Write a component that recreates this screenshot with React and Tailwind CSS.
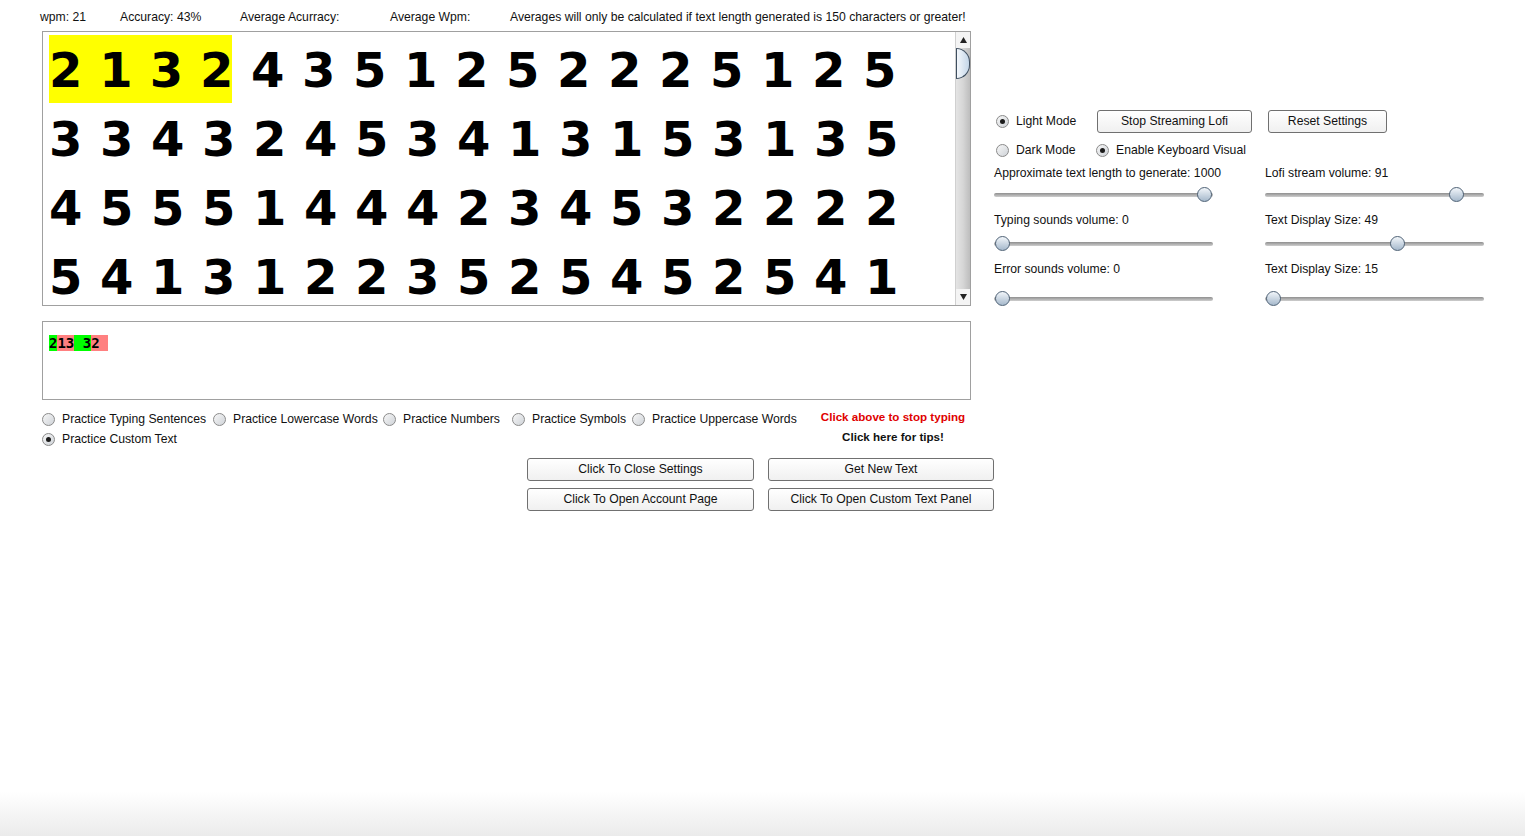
import React from 'react';

const rows = [
  '2 1 3 2 4 3 5 1 2 5 2 2 2 5 1 2 5',
  '3 3 4 3 2 4 5 3 4 1 3 1 5 3 1 3 5',
  '4 5 5 5 1 4 4 4 2 3 4 5 3 2 2 2 2',
  '5 4 1 3 1 2 2 3 5 2 5 4 5 2 5 4 1',
].map(r => r.split(' '));

const Radio = ({ checked }) => (
  <span className="w-[13px] h-[13px] rounded-full border border-[#8a8a8a] bg-linear-to-br from-[#f7f7f7] to-[#cfd3d8] flex items-center justify-center shrink-0">
    {checked && <span className="w-[5px] h-[5px] rounded-full bg-[#1b1b1b]" />}
  </span>
);

const RadioItem = ({ label, checked, className = '' }) => (
  <div className={`flex items-center gap-[7px] h-[16px] ${className}`}>
    <Radio checked={checked} />
    <span className="whitespace-nowrap">{label}</span>
  </div>
);

const Button = ({ children, className = '' }) => (
  <button className={`h-[23px] rounded-[3px] border border-[#707070] bg-linear-to-b from-white to-[#f0f0f0] text-[12.2px] text-[#111] flex items-center justify-center whitespace-nowrap ${className}`}>
    {children}
  </button>
);

const Slider = ({ pos }) => (
  <div className="relative h-[16px] w-[219px]">
    <div className="absolute left-0 right-0 top-[6px] h-[4px] rounded-full bg-linear-to-b from-[#8f8f8f] to-[#cfcfcf]" />
    <div
      className="absolute top-0 w-[15px] h-[15px] rounded-full border border-[#4f6276] bg-linear-to-b from-[#f2f6fa] to-[#a6b9cc]"
      style={{ left: pos }}
    />
  </div>
);

const Arrow = ({ up }) => (
  <svg width="7" height="6" viewBox="0 0 7 6">
    <path d={up ? 'M3.5 0 L7 6 L0 6 Z' : 'M0 0 L7 0 L3.5 6 Z'} fill="#222" />
  </svg>
);

const Digit = ({ d, last }) => (
  <span className={`inline-block text-left ${last ? 'w-[32px]' : 'w-[51px]'}`}>{d}</span>
);

const App = () => {
  return (
    <div className="min-h-[836px] bg-white flex flex-col font-['Liberation_Sans',Arial,sans-serif] text-[12.2px] text-[#111]">
      {/* stats */}
      <div className="h-[31px] pt-[10px] pl-[40px] flex leading-[14px] whitespace-nowrap">
        <span className="w-[80px]">wpm: 21</span>
        <span className="w-[120px]">Accuracy: 43%</span>
        <span className="w-[150px]">Average Acurracy:</span>
        <span className="w-[120px]">Average Wpm:</span>
        <span>Averages will only be calculated if text length generated is 150 characters or greater!</span>
      </div>

      <div className="flex pl-[42px]">
        {/* left column */}
        <div className="w-[929px]">
          <div className="h-[275px] border border-[#a0a0a0] flex">
            <div className="flex-1 overflow-hidden pt-[3px] pl-[6px] font-['DejaVu_Sans',sans-serif] font-bold text-[48px] text-black">
              {rows.map((row, i) => (
                <div key={i} className="h-[69px] leading-[71px] flex whitespace-nowrap">
                  {i === 0 ? (
                    <>
                      <div className="flex bg-[#ffff00] w-[183px] h-[68px] mr-[19px]">
                        {row.slice(0, 4).map((d, j) => <Digit key={j} d={d} last={j === 3} />)}
                      </div>
                      {row.slice(4).map((d, j) => <Digit key={j} d={d} />)}
                    </>
                  ) : (
                    row.map((d, j) => <Digit key={j} d={d} />)
                  )}
                </div>
              ))}
            </div>
            <div className="w-[15px] flex flex-col bg-linear-to-r from-[#e4e4e4] via-[#d6d6d6] to-[#bdbdbd] border-l border-[#d0d0d0]">
              <div className="h-[16px] flex items-center justify-center bg-[#f4f4f4]">
                <Arrow up />
              </div>
              <div className="h-[31px] rounded-r-full rounded-l-[6px] border border-[#3f4f60] bg-linear-to-r from-[#f4f8fc] to-[#c4d6e8]" />
              <div className="flex-1" />
              <div className="h-[16px] flex items-center justify-center bg-[#f4f4f4]">
                <Arrow />
              </div>
            </div>
          </div>

          <div className="mt-[15px] h-[79px] border border-[#a0a0a0] pt-[11px] pl-[6px] font-['DejaVu_Sans_Mono',monospace] font-bold text-[14px] leading-[21px] text-black whitespace-pre">
            <span className="bg-[#00ff00]">2</span>
            <span className="bg-[#ff8080]">13</span>
            <span className="bg-[#00ff00]"> 3</span>
            <span className="bg-[#ff8080]">2 </span>
          </div>

          <div className="mt-[11px] flex">
            <div className="w-[778px]">
              <div className="flex">
                <RadioItem label="Practice Typing Sentences" className="w-[171px]" />
                <RadioItem label="Practice Lowercase Words" className="w-[170px]" />
                <RadioItem label="Practice Numbers" className="w-[129px]" />
                <RadioItem label="Practice Symbols" className="w-[120px]" />
                <RadioItem label="Practice Uppercase Words" className="w-[170px]" />
              </div>
              <div className="mt-[4px]">
                <RadioItem label="Practice Custom Text" checked />
              </div>
            </div>
            <div className="w-[146px] flex flex-col items-center font-bold text-[11.6px] leading-[20px] -mt-[4px]">
              <span className="text-[#e00000] whitespace-nowrap">Click above to stop typing</span>
              <span className="whitespace-nowrap">Click here for tips!</span>
            </div>
          </div>
        </div>

        {/* right panel */}
        <div className="ml-[23px] pt-[79px]">
          <div className="flex items-center h-[23px]">
            <RadioItem label="Light Mode" checked className="w-[101px] ml-[2px]" />
            <Button className="w-[155px]">Stop Streaming Lofi</Button>
            <Button className="w-[119px] ml-[16px]">Reset Settings</Button>
          </div>
          <div className="flex items-center mt-[9px]">
            <RadioItem label="Dark Mode" className="w-[100px] ml-[2px]" />
            <RadioItem label="Enable Keyboard Visual" checked />
          </div>
          <div className="flex gap-[52px]">
            <div className="w-[219px] flex flex-col whitespace-nowrap">
              <span className="mt-[8px] h-[14px] leading-[14px]">Approximate text length to generate: 1000</span>
              <div className="mt-[7px]"><Slider pos={203} /></div>
              <span className="mt-[10px] h-[14px] leading-[14px]">Typing sounds volume: 0</span>
              <div className="mt-[9px]"><Slider pos={1} /></div>
              <span className="mt-[10px] h-[14px] leading-[14px]">Error sounds volume: 0</span>
              <div className="mt-[15px]"><Slider pos={1} /></div>
            </div>
            <div className="w-[219px] flex flex-col whitespace-nowrap">
              <span className="mt-[8px] h-[14px] leading-[14px]">Lofi stream volume: 91</span>
              <div className="mt-[7px]"><Slider pos={184} /></div>
              <span className="mt-[10px] h-[14px] leading-[14px]">Text Display Size: 49</span>
              <div className="mt-[9px]"><Slider pos={125} /></div>
              <span className="mt-[10px] h-[14px] leading-[14px]">Text Display Size: 15</span>
              <div className="mt-[15px]"><Slider pos={1} /></div>
            </div>
          </div>
        </div>
      </div>

      {/* buttons */}
      <div className="mt-[11px] pl-[527px] grid grid-cols-[227px_226px] gap-x-[14px] gap-y-[7px] w-fit">
        <Button>Click To Close Settings</Button>
        <Button>Get New Text</Button>
        <Button>Click To Open Account Page</Button>
        <Button>Click To Open Custom Text Panel</Button>
      </div>

      <div className="flex-1" />
      <div className="h-[44px] bg-linear-to-b from-white to-[#ebebeb]" />
    </div>
  );
};

export default App;
